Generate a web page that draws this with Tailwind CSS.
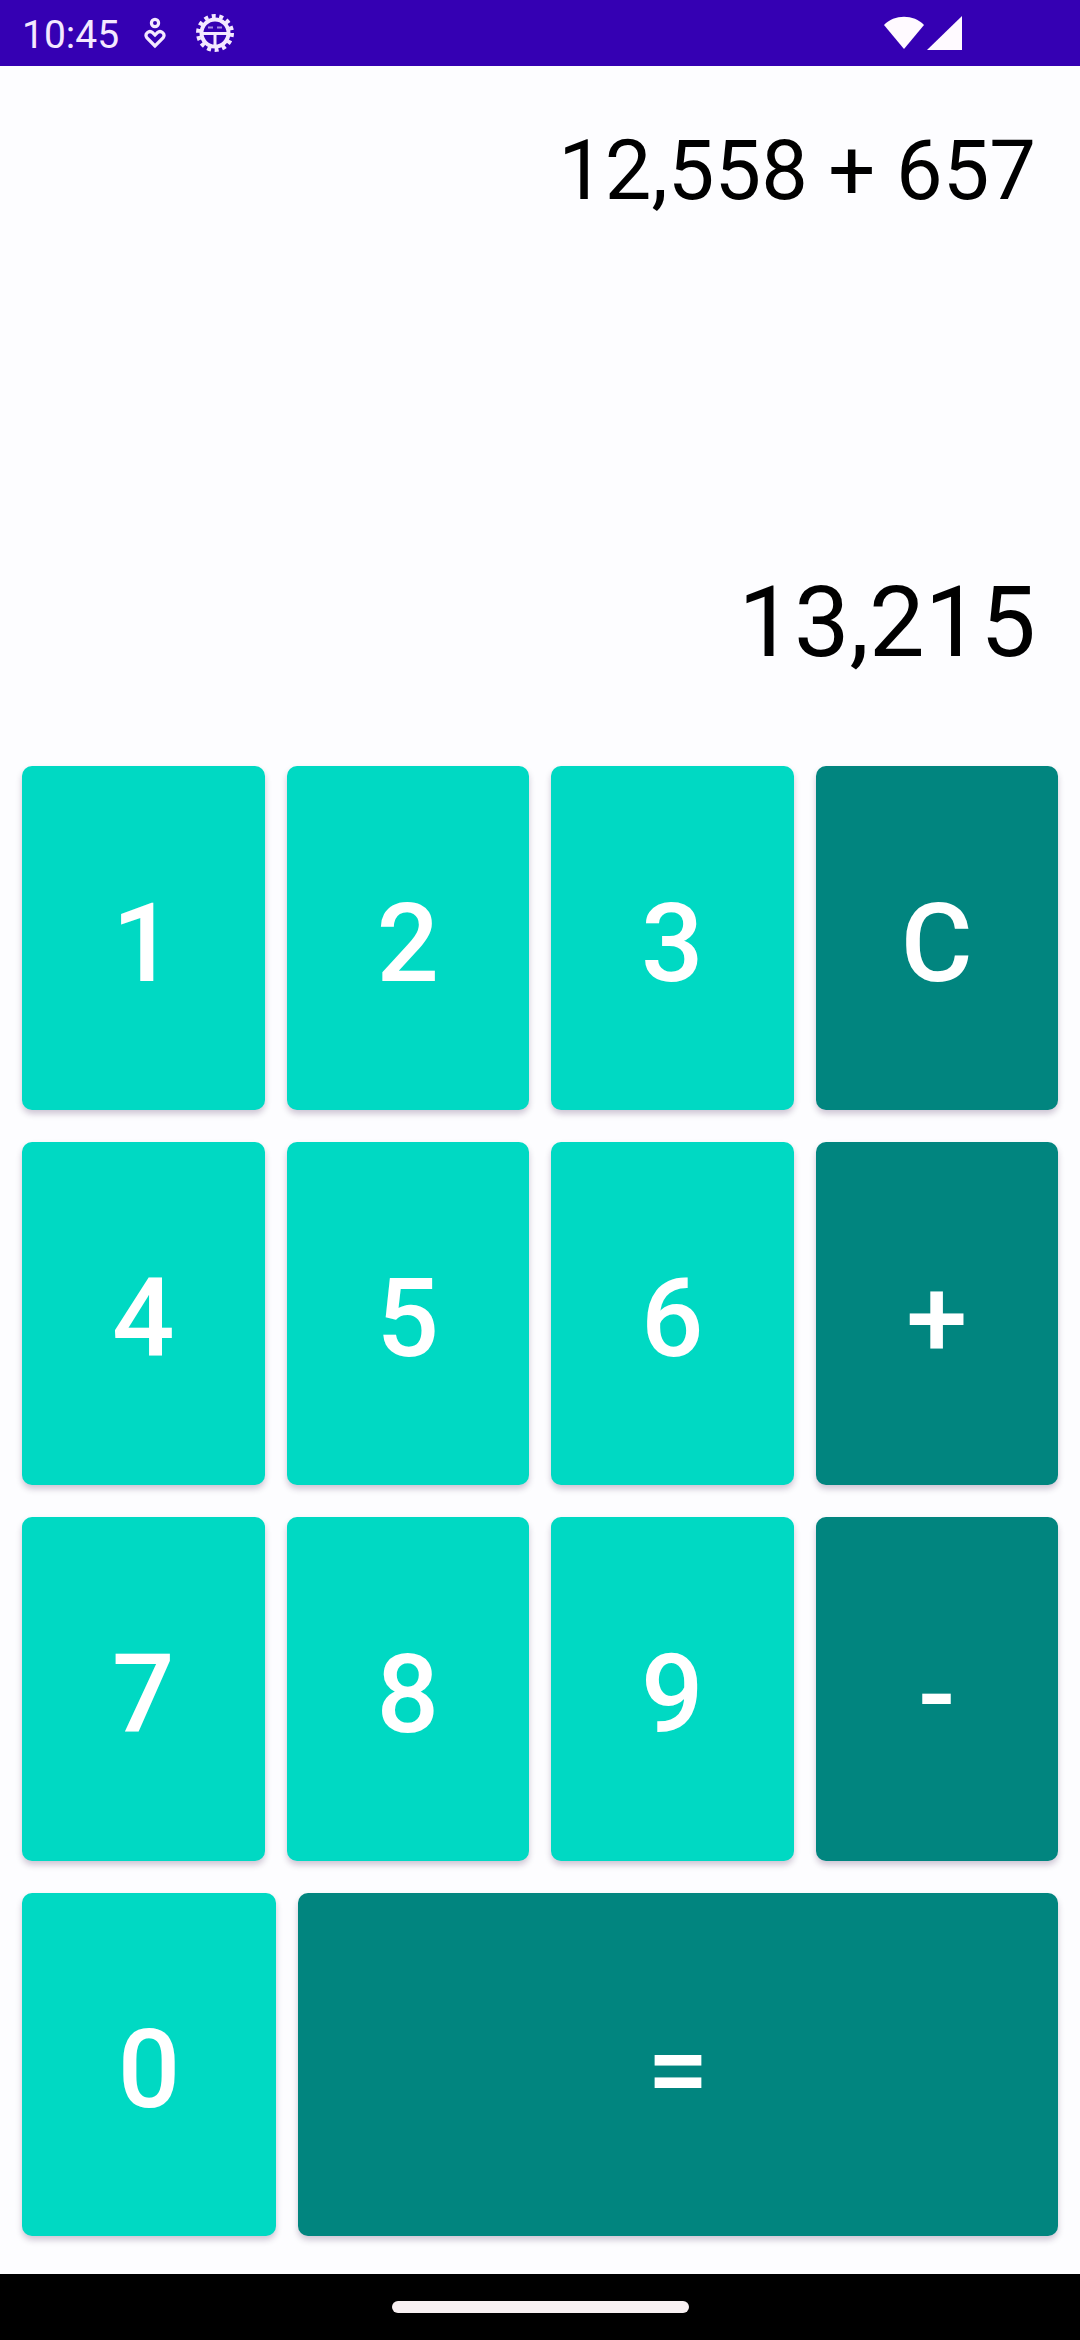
<!DOCTYPE html>
<html lang="en">
<head>
    <meta charset="UTF-8">
    <meta name="viewport" content="width=device-width, initial-scale=1.0">
    <title>Calculator</title>
    <script src="https://cdn.jsdelivr.net/npm/@tailwindcss/browser@4"></script>
</head>
<body class="w-[1080px] h-[2340px] flex flex-col overflow-hidden bg-[#fdfdff] font-['Roboto',sans-serif]">
    <!-- Status bar -->
    <header class="h-[66px] shrink-0 bg-[#3500b3] flex items-center justify-between pl-[22px] pr-[118px]">
        <div class="flex items-center text-[#f4e8ff]">
            <span class="text-[39px] leading-[66px] pt-[3px]">10:45</span>
            <svg class="ml-[24px] w-[24px] h-[32px]" viewBox="0 0 24 32" fill="none" stroke="currentColor" stroke-width="3.200">
                <circle cx="12" cy="6" r="3.600" />
                <path d="M12 29 L4 21 C1 17 6 12.500 9.800 15.800 L12 18 L14.200 15.800 C18 12.500 23 17 20 21 Z" />
            </svg>
            <svg class="ml-[28px] w-[40px] h-[40px]" viewBox="0 0 40 40" fill="none" stroke="currentColor">
                <circle cx="20" cy="20" r="13.500" stroke-width="4" />
                <circle cx="20" cy="20" r="17" stroke-width="4" stroke-dasharray="4 3.630" />
                <path d="M7 20.500H33M20 20.500V33" stroke-width="3" />
                <path d="M13 14.500H18M22 14.500H27" stroke-width="2" opacity=".6" />
            </svg>
        </div>
        <div class="flex items-center text-[#fffaff]">
            <svg class="w-[40px] h-[34px]" viewBox="0 0 40 34" fill="currentColor">
                <path d="M0 9 C10 -2 30 -2 40 9 L20 33 Z" />
            </svg>
            <svg class="ml-[3px] w-[35px] h-[34px]" viewBox="0 0 35 34" fill="currentColor">
                <path d="M35 0 V34 H0 Z" />
            </svg>
        </div>
    </header>

    <!-- Expression and result -->
    <section class="h-[700px] shrink-0 pr-[44px] flex flex-col items-end text-black">
        <p class="mt-[56px] text-[83px] leading-[97px] whitespace-pre">12,558 + 657</p>
        <p class="mt-[345px] text-[99px] leading-[116px]">13,215</p>
    </section>

    <!-- Keypad -->
    <main class="h-[1508px] shrink-0 px-[22px] pb-[38px] flex flex-col gap-[32px] text-[110px] leading-none font-medium text-white">
        <div class="flex-1 grid grid-cols-4 gap-[22px]">
            <button class="pt-[12px] rounded-[10px] bg-[#00d9c3] shadow-[0_4px_6px_rgba(40,0,60,0.22)]">1</button>
            <button class="pt-[12px] rounded-[10px] bg-[#00d9c3] shadow-[0_4px_6px_rgba(40,0,60,0.22)]">2</button>
            <button class="pt-[12px] rounded-[10px] bg-[#00d9c3] shadow-[0_4px_6px_rgba(40,0,60,0.22)]">3</button>
            <button class="pt-[12px] rounded-[10px] bg-[#01857f] shadow-[0_4px_6px_rgba(40,0,60,0.22)]">C</button>
        </div>
        <div class="flex-1 grid grid-cols-4 gap-[22px]">
            <button class="pt-[12px] rounded-[10px] bg-[#00d9c3] shadow-[0_4px_6px_rgba(40,0,60,0.22)]">4</button>
            <button class="pt-[12px] rounded-[10px] bg-[#00d9c3] shadow-[0_4px_6px_rgba(40,0,60,0.22)]">5</button>
            <button class="pt-[12px] rounded-[10px] bg-[#00d9c3] shadow-[0_4px_6px_rgba(40,0,60,0.22)]">6</button>
            <button class="pt-[12px] rounded-[10px] bg-[#01857f] shadow-[0_4px_6px_rgba(40,0,60,0.22)]">+</button>
        </div>
        <div class="flex-1 grid grid-cols-4 gap-[22px]">
            <button class="pt-[12px] rounded-[10px] bg-[#00d9c3] shadow-[0_4px_6px_rgba(40,0,60,0.22)]">7</button>
            <button class="pt-[12px] rounded-[10px] bg-[#00d9c3] shadow-[0_4px_6px_rgba(40,0,60,0.22)]">8</button>
            <button class="pt-[12px] rounded-[10px] bg-[#00d9c3] shadow-[0_4px_6px_rgba(40,0,60,0.22)]">9</button>
            <button class="pt-[12px] rounded-[10px] bg-[#01857f] shadow-[0_4px_6px_rgba(40,0,60,0.22)]">-</button>
        </div>
        <div class="flex-1 flex gap-[22px]">
            <button class="w-[254px] pt-[12px] rounded-[10px] bg-[#00d9c3] shadow-[0_4px_6px_rgba(40,0,60,0.22)]">0</button>
            <button class="flex-1 pt-[12px] rounded-[10px] bg-[#01857f] shadow-[0_4px_6px_rgba(40,0,60,0.22)]">=</button>
        </div>
    </main>

    <!-- Gesture bar -->
    <footer class="flex-1 bg-black flex justify-center pt-[27px]">
        <div class="w-[297px] h-[12px] rounded-full bg-[#f8f0f2]"></div>
    </footer>
</body>
</html>
